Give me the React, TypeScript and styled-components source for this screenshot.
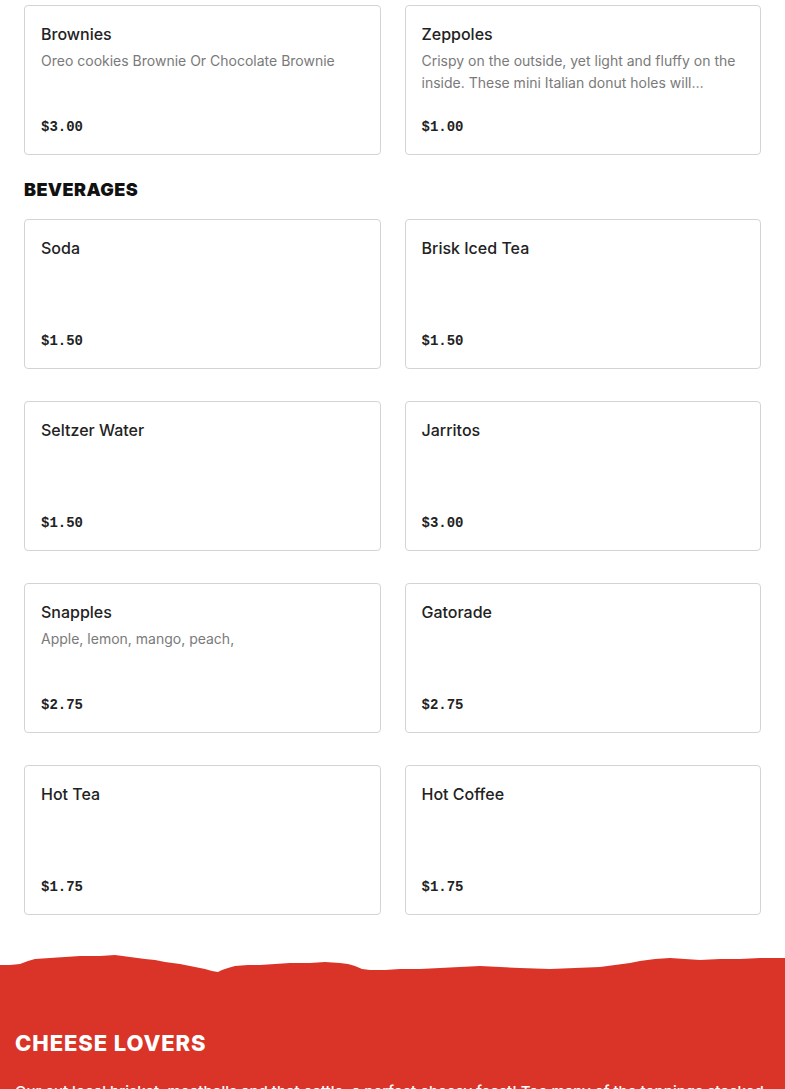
import styled, { createGlobalStyle } from 'styled-components';

const GlobalStyle = createGlobalStyle`
  body {
    margin: 0;
    background: #fff;
    font-family: Inter, "Noto Sans", sans-serif;
    color: #222;
  }
`;

type Item = { name: string; desc?: string; price: string };

const desserts: Item[] = [
  { name: 'Brownies', desc: 'Oreo cookies Brownie Or Chocolate Brownie', price: '$3.00' },
  {
    name: 'Zeppoles',
    desc: 'Crispy on the outside, yet light and fluffy on the inside. These mini Italian donut holes will become your new favorite dessert.',
    price: '$1.00',
  },
];

const beverages: Item[] = [
  { name: 'Soda', price: '$1.50' },
  { name: 'Brisk Iced Tea', price: '$1.50' },
  { name: 'Seltzer Water', price: '$1.50' },
  { name: 'Jarritos', price: '$3.00' },
  { name: 'Snapples', desc: 'Apple, lemon, mango, peach,', price: '$2.75' },
  { name: 'Gatorade', price: '$2.75' },
  { name: 'Hot Tea', price: '$1.75' },
  { name: 'Hot Coffee', price: '$1.75' },
];

const StyledMenu = styled.div`
  padding: 5px 24px 0;
`;

const StyledGrid = styled.div`
  display: grid;
  grid-template-columns: 1fr 1fr;
  column-gap: 24px;
  row-gap: 32px;
`;

const StyledCard = styled.div`
  box-sizing: border-box;
  height: 150px;
  padding: 16px 16px 15px;
  border: 1px solid #d4d4d4;
  border-radius: 4px;
  display: flex;
  flex-direction: column;
  min-width: 0;
`;

const StyledName = styled.h3`
  margin: 0;
  font-size: 16px;
  font-weight: 500;
  line-height: 24px;
  color: #222;
`;

const StyledDesc = styled.p`
  margin: 4px 0 0;
  font-size: 14px;
  line-height: 22px;
  color: #7a7a7a;
  display: -webkit-box;
  -webkit-line-clamp: 2;
  -webkit-box-orient: vertical;
  overflow: hidden;
`;

const StyledPrice = styled.div`
  margin-top: auto;
  font-family: "Liberation Mono", "DejaVu Sans Mono", monospace;
  font-weight: 700;
  font-size: 14px;
  line-height: 24px;
  color: #222;
`;

const StyledSectionTitle = styled.h2`
  margin: 23px 0 17px;
  font-size: 18px;
  font-weight: 900;
  line-height: 24px;
  letter-spacing: 0.4px;
  color: #111;
`;

const StyledTorn = styled.svg`
  display: block;
  width: 100%;
  height: 25px;
  margin-top: 35px;
`;

const StyledRedSection = styled.section`
  background: #da3327;
  padding: 54px 15px 0;
  min-height: 200px;
  color: #fff;
  overflow: hidden;
`;

const StyledRedTitle = styled.h2`
  margin: 0;
  font-size: 22px;
  font-weight: 800;
  line-height: 28px;
  letter-spacing: 0.9px;
`;

const StyledRedText = styled.p`
  margin: 24px 0 0;
  font-size: 15px;
  font-weight: 500;
  line-height: 22px;
`;

const edge =
  'M0,15 L10,15 L20,14 L28,11 L35,9 L50,8 L80,6 L100,6 L115,5 L130,7 L145,9 L155,10 L165,12 L180,14 L195,17 L205,19 L212,21 L218,22 L222,20 L228,18 L235,16 L248,15 L260,15 L275,14 L290,13 L310,13 L325,12 L340,13 L348,14 L355,16 L362,19 L370,20 L385,20 L400,19 L420,19 L440,18 L460,17 L480,16 L500,17 L520,18 L550,19 L575,18 L600,17 L615,15 L630,13 L640,11 L655,9 L670,8 L685,9 L700,10 L720,9 L740,9 L760,8 L775,8 L785,8 L785,25 L0,25 Z';

function Card({ item }: { item: Item }) {
  return (
    <StyledCard>
      <StyledName>{item.name}</StyledName>
      {item.desc && <StyledDesc>{item.desc}</StyledDesc>}
      <StyledPrice>{item.price}</StyledPrice>
    </StyledCard>
  );
}

function App() {
  return (
    <>
      <GlobalStyle />
      <StyledMenu>
        <StyledGrid>
          {desserts.map((item) => (
            <Card key={item.name} item={item} />
          ))}
        </StyledGrid>
        <StyledSectionTitle>BEVERAGES</StyledSectionTitle>
        <StyledGrid>
          {beverages.map((item) => (
            <Card key={item.name} item={item} />
          ))}
        </StyledGrid>
      </StyledMenu>
      <StyledTorn viewBox="0 0 785 25" preserveAspectRatio="none">
        <path d={edge} fill="#da3327" />
      </StyledTorn>
      <StyledRedSection>
        <StyledRedTitle>CHEESE LOVERS</StyledRedTitle>
        <StyledRedText>
          Our cut local brisket, meatballs and that cattle, a perfect cheesy feast! Too many of the toppings stacked to New York and
          more, all in one pie.
        </StyledRedText>
      </StyledRedSection>
    </>
  );
}

export default App;
